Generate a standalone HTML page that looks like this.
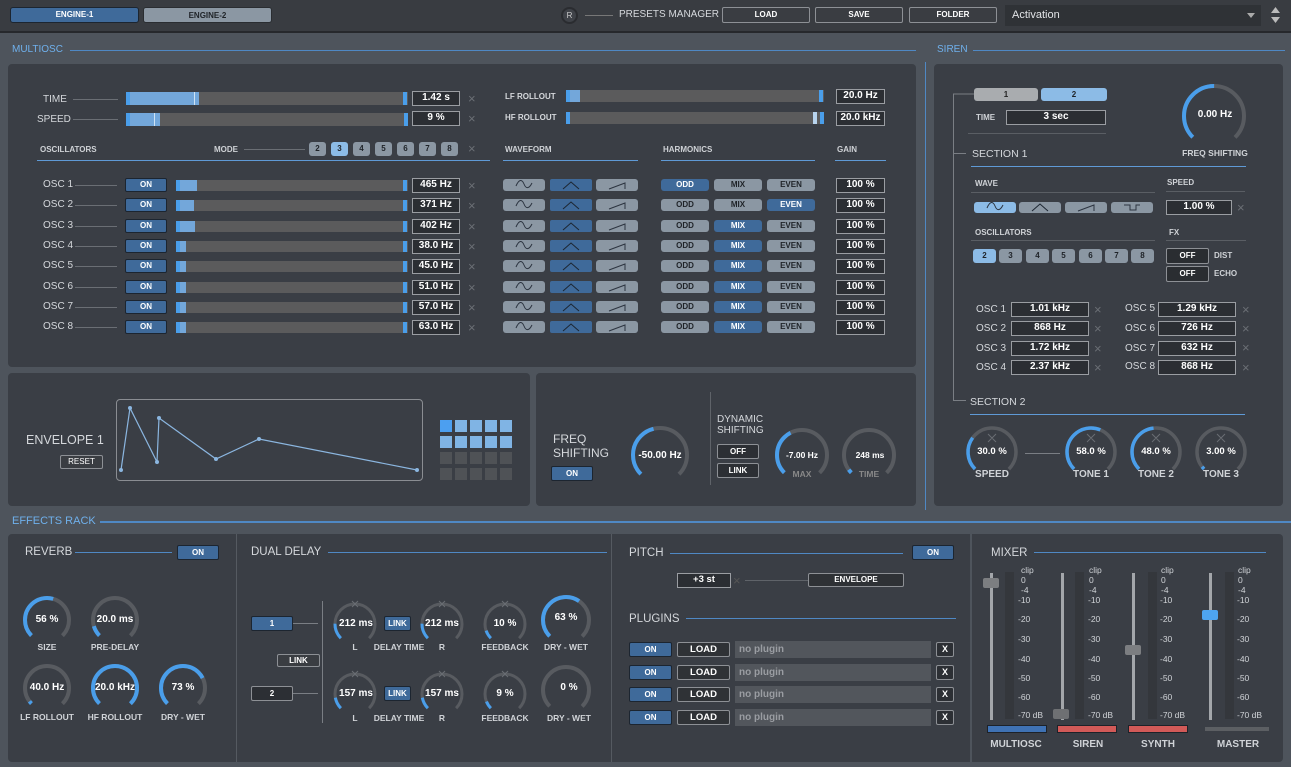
<!DOCTYPE html>
<html><head><meta charset="utf-8"><style>
*{margin:0;padding:0;box-sizing:border-box}
body{width:1291px;height:767px;background:#4e545c;position:relative;overflow:hidden;font-family:"Liberation Sans",sans-serif;color:#d8dade}
.a{position:absolute}
.p{position:absolute;background:#3a3e45;border-radius:4px}
.l{position:absolute;font-size:10px;line-height:12px;color:#d5d8dc;white-space:nowrap}
.s{font-size:8px;font-weight:bold;color:#cfd2d6}
.b{position:absolute;font-size:8px;font-weight:bold;text-align:center;border-radius:2px;white-space:nowrap}
.bb{background:#3f6a9a;border:1px solid #1c2530;color:#fff}
.gb{background:#8b97a3;color:#1f2328;border-radius:3px}
.lb{background:#8cbbe6;color:#1f2328;border-radius:3px}
.db{background:#2c2f34;border:1px solid #8d9095;color:#fff}
.vb{position:absolute;background:#2b2e33;border:1px solid #9a9da2;color:#fff;font-size:10px;font-weight:bold;text-align:center;line-height:12px}
.x{position:absolute;color:#6b6f75;font-size:13px;line-height:12px}
.tr{position:absolute;background:#5b5b5c}
.f{position:absolute;background:#73a7da}
.m{position:absolute;background:#4a9eea}
.h{position:absolute;color:#6fb0ec;font-size:11px;line-height:12px}
.kv{position:absolute;font-size:10px;font-weight:bold;color:#fff;text-align:center;line-height:12px}
.kl{position:absolute;font-size:8.5px;color:#d0d3d7;text-align:center;line-height:10px;font-weight:bold}
.sc{position:absolute;font-size:8.5px;color:#d0d3d7;line-height:10px}
</style></head><body>
<!-- top bar -->
<div class="a" style="left:0;top:0;width:1291px;height:33px;background:#393c41;border-bottom:2px solid #26282c"></div>
<div class="b bb" style="left:10px;top:7px;width:129px;height:16px;line-height:14px;border-radius:3px">ENGINE-1</div>
<div class="b gb" style="left:143px;top:7px;width:129px;height:16px;line-height:16px;border:1px solid #2a2d31">ENGINE-2</div>
<div class="a" style="left:561px;top:7px;width:17px;height:17px;border-radius:50%;border:2px solid #2a2c30;background:#3f4248;font-size:8px;line-height:13px;text-align:center;color:#ccc">R</div>
<div class="a" style="left:585px;top:15px;width:28px;height:1px;background:#777"></div>
<div class="l" style="left:619px;top:9px;font-size:10px">PRESETS MANAGER</div>
<div class="b db" style="left:722px;top:7px;width:88px;height:16px;line-height:14px;background:#3a3d42">LOAD</div>
<div class="b db" style="left:815px;top:7px;width:88px;height:16px;line-height:14px;background:#3a3d42">SAVE</div>
<div class="b db" style="left:909px;top:7px;width:88px;height:16px;line-height:14px;background:#3a3d42">FOLDER</div>
<div class="a" style="left:1005px;top:5px;width:256px;height:21px;background:#2f3236"></div>
<div class="l" style="left:1012px;top:9px;font-size:11px;color:#e2e4e7">Activation</div>
<!-- headers -->
<div class="h" style="left:12px;top:44px;font-size:10px">MULTIOSC</div>
<div class="a" style="left:70px;top:50px;width:846px;height:1px;background:#4f88c4"></div>
<div class="h" style="left:937px;top:44px;font-size:10px">SIREN</div>
<div class="a" style="left:973px;top:50px;width:312px;height:1px;background:#4f88c4"></div>
<div class="a" style="left:925px;top:62px;width:1px;height:448px;background:#4f88c4"></div>
<div class="h" style="left:12px;top:515px">EFFECTS RACK</div>
<div class="a" style="left:100px;top:521px;width:1191px;height:2px;background:#4f88c4"></div>
<!-- panels -->
<div class="p" style="left:8px;top:64px;width:908px;height:303px"></div>
<div class="p" style="left:8px;top:373px;width:522px;height:133px"></div>
<div class="p" style="left:536px;top:373px;width:380px;height:133px"></div>
<div class="p" style="left:934px;top:64px;width:349px;height:442px"></div>
<div class="p" style="left:8px;top:534px;width:1275px;height:228px"></div>
<div class="a" style="left:236px;top:534px;width:1px;height:228px;background:#555a61"></div>
<div class="a" style="left:611px;top:534px;width:1px;height:228px;background:#555a61"></div>
<div class="a" style="left:970px;top:534px;width:2px;height:228px;background:#4e545c"></div>

<!-- MULTIOSC top sliders -->
<div class="l" style="left:43px;top:94px">TIME</div>
<div class="a" style="left:73px;top:99px;width:45px;height:1px;background:#6a6e74"></div>
<div class="tr" style="left:126px;top:92px;width:282px;height:13px"></div>
<div class="f" style="left:126px;top:92px;width:73px;height:13px"></div>
<div class="m" style="left:126px;top:92px;width:4px;height:13px"></div>
<div class="a" style="left:194px;top:92px;width:1px;height:13px;background:#cfe3f5"></div>
<div class="m" style="left:403px;top:92px;width:4px;height:13px"></div>
<div class="vb" style="left:412px;top:91px;width:48px;height:15px">1.42 s</div><div class="x" style="left:468px;top:93px">×</div>
<div class="l" style="left:37px;top:114px">SPEED</div>
<div class="a" style="left:73px;top:119px;width:45px;height:1px;background:#6a6e74"></div>
<div class="tr" style="left:126px;top:113px;width:282px;height:13px"></div>
<div class="f" style="left:126px;top:113px;width:34px;height:13px"></div>
<div class="m" style="left:126px;top:113px;width:4px;height:13px"></div>
<div class="a" style="left:154px;top:113px;width:1px;height:13px;background:#cfe3f5"></div>
<div class="m" style="left:404px;top:113px;width:4px;height:13px"></div>
<div class="vb" style="left:412px;top:111px;width:48px;height:15px">9 %</div><div class="x" style="left:468px;top:113px">×</div>

<div class="l s" style="left:40px;top:144px">OSCILLATORS</div>
<div class="l s" style="left:214px;top:144px">MODE</div>
<div class="a" style="left:244px;top:149px;width:61px;height:1px;background:#6a6e74"></div>
<div class="b gb" style="left:309px;top:142px;width:17px;height:14px;line-height:14px">2</div>
<div class="b lb" style="left:331px;top:142px;width:17px;height:14px;line-height:14px">3</div>
<div class="b gb" style="left:353px;top:142px;width:17px;height:14px;line-height:14px">4</div>
<div class="b gb" style="left:375px;top:142px;width:17px;height:14px;line-height:14px">5</div>
<div class="b gb" style="left:397px;top:142px;width:17px;height:14px;line-height:14px">6</div>
<div class="b gb" style="left:419px;top:142px;width:17px;height:14px;line-height:14px">7</div>
<div class="b gb" style="left:441px;top:142px;width:17px;height:14px;line-height:14px">8</div>
<div class="x" style="left:468px;top:143px">×</div>
<div class="a" style="left:37px;top:160px;width:453px;height:1px;background:#5f9ad6"></div>
<div class="l" style="left:505px;top:91px;font-size:8px;font-weight:bold">LF ROLLOUT</div>
<div class="tr" style="left:566px;top:90px;width:258px;height:12px"></div>
<div class="f" style="left:566px;top:90px;width:14px;height:12px"></div><div class="m" style="left:566px;top:90px;width:4px;height:12px"></div>
<div class="m" style="left:819px;top:90px;width:4px;height:12px"></div>
<div class="vb" style="left:836px;top:89px;width:49px;height:15px">20.0 Hz</div>
<div class="l" style="left:505px;top:112px;font-size:8px;font-weight:bold">HF ROLLOUT</div>
<div class="tr" style="left:566px;top:112px;width:258px;height:12px"></div>
<div class="m" style="left:566px;top:112px;width:4px;height:12px"></div>
<div class="a" style="left:813px;top:112px;width:4px;height:12px;background:#b8d4ee"></div><div class="m" style="left:820px;top:112px;width:4px;height:12px"></div>
<div class="vb" style="left:836px;top:111px;width:49px;height:15px">20.0 kHz</div>
<div class="l s" style="left:505px;top:144px">WAVEFORM</div><div class="a" style="left:503px;top:160px;width:135px;height:1px;background:#5f9ad6"></div>
<div class="l s" style="left:663px;top:144px">HARMONICS</div><div class="a" style="left:661px;top:160px;width:154px;height:1px;background:#5f9ad6"></div>
<div class="l s" style="left:837px;top:144px">GAIN</div><div class="a" style="left:835px;top:160px;width:51px;height:1px;background:#5f9ad6"></div>

<!-- OSC rows -->
<div class="l" style="left:43px;top:179px">OSC 1</div><div class="b bb" style="left:125px;top:178px;width:42px;height:14px;line-height:12px">ON</div><div class="tr" style="left:176px;top:180px;width:232px;height:11px"></div><div class="f" style="left:176px;top:180px;width:21px;height:11px"></div><div class="m" style="left:176px;top:180px;width:4px;height:11px"></div><div class="m" style="left:403px;top:180px;width:4px;height:11px"></div><div class="vb" style="left:412px;top:178px;width:48px;height:15px">465 Hz</div><div class="x" style="left:468px;top:180px">×</div>
<div class="l" style="left:43px;top:199px">OSC 2</div><div class="b bb" style="left:125px;top:198px;width:42px;height:14px;line-height:12px">ON</div><div class="tr" style="left:176px;top:200px;width:232px;height:11px"></div><div class="f" style="left:176px;top:200px;width:18px;height:11px"></div><div class="m" style="left:176px;top:200px;width:4px;height:11px"></div><div class="m" style="left:403px;top:200px;width:4px;height:11px"></div><div class="vb" style="left:412px;top:198px;width:48px;height:15px">371 Hz</div><div class="x" style="left:468px;top:200px">×</div>
<div class="l" style="left:43px;top:220px">OSC 3</div><div class="b bb" style="left:125px;top:219px;width:42px;height:14px;line-height:12px">ON</div><div class="tr" style="left:176px;top:221px;width:232px;height:11px"></div><div class="f" style="left:176px;top:221px;width:19px;height:11px"></div><div class="m" style="left:176px;top:221px;width:4px;height:11px"></div><div class="m" style="left:403px;top:221px;width:4px;height:11px"></div><div class="vb" style="left:412px;top:219px;width:48px;height:15px">402 Hz</div><div class="x" style="left:468px;top:221px">×</div>
<div class="l" style="left:43px;top:240px">OSC 4</div><div class="b bb" style="left:125px;top:239px;width:42px;height:14px;line-height:12px">ON</div><div class="tr" style="left:176px;top:241px;width:232px;height:11px"></div><div class="f" style="left:176px;top:241px;width:10px;height:11px"></div><div class="m" style="left:176px;top:241px;width:4px;height:11px"></div><div class="m" style="left:403px;top:241px;width:4px;height:11px"></div><div class="vb" style="left:412px;top:239px;width:48px;height:15px">38.0 Hz</div><div class="x" style="left:468px;top:241px">×</div>
<div class="l" style="left:43px;top:260px">OSC 5</div><div class="b bb" style="left:125px;top:259px;width:42px;height:14px;line-height:12px">ON</div><div class="tr" style="left:176px;top:261px;width:232px;height:11px"></div><div class="f" style="left:176px;top:261px;width:10px;height:11px"></div><div class="m" style="left:176px;top:261px;width:4px;height:11px"></div><div class="m" style="left:403px;top:261px;width:4px;height:11px"></div><div class="vb" style="left:412px;top:259px;width:48px;height:15px">45.0 Hz</div><div class="x" style="left:468px;top:261px">×</div>
<div class="l" style="left:43px;top:281px">OSC 6</div><div class="b bb" style="left:125px;top:280px;width:42px;height:14px;line-height:12px">ON</div><div class="tr" style="left:176px;top:282px;width:232px;height:11px"></div><div class="f" style="left:176px;top:282px;width:10px;height:11px"></div><div class="m" style="left:176px;top:282px;width:4px;height:11px"></div><div class="m" style="left:403px;top:282px;width:4px;height:11px"></div><div class="vb" style="left:412px;top:280px;width:48px;height:15px">51.0 Hz</div><div class="x" style="left:468px;top:282px">×</div>
<div class="l" style="left:43px;top:301px">OSC 7</div><div class="b bb" style="left:125px;top:300px;width:42px;height:14px;line-height:12px">ON</div><div class="tr" style="left:176px;top:302px;width:232px;height:11px"></div><div class="f" style="left:176px;top:302px;width:10px;height:11px"></div><div class="m" style="left:176px;top:302px;width:4px;height:11px"></div><div class="m" style="left:403px;top:302px;width:4px;height:11px"></div><div class="vb" style="left:412px;top:300px;width:48px;height:15px">57.0 Hz</div><div class="x" style="left:468px;top:302px">×</div>
<div class="l" style="left:43px;top:321px">OSC 8</div><div class="b bb" style="left:125px;top:320px;width:42px;height:14px;line-height:12px">ON</div><div class="tr" style="left:176px;top:322px;width:232px;height:11px"></div><div class="f" style="left:176px;top:322px;width:10px;height:11px"></div><div class="m" style="left:176px;top:322px;width:4px;height:11px"></div><div class="m" style="left:403px;top:322px;width:4px;height:11px"></div><div class="vb" style="left:412px;top:320px;width:48px;height:15px">63.0 Hz</div><div class="x" style="left:468px;top:322px">×</div>

<!-- waveform/harmonic/gain rows -->
<div class="b gb" style="left:503px;top:179px;width:42px;height:12px"></div><div class="b bb" style="left:550px;top:179px;width:42px;height:12px;border:none"></div><div class="b gb" style="left:596px;top:179px;width:42px;height:12px"></div><div class="b bb" style="left:661px;top:179px;width:48px;height:12px;line-height:12px;border:none;border-radius:3px">ODD</div><div class="b gb" style="left:714px;top:179px;width:48px;height:12px;line-height:12px">MIX</div><div class="b gb" style="left:767px;top:179px;width:48px;height:12px;line-height:12px">EVEN</div><div class="vb" style="left:836px;top:178px;width:49px;height:15px">100 %</div>
<div class="b gb" style="left:503px;top:199px;width:42px;height:12px"></div><div class="b bb" style="left:550px;top:199px;width:42px;height:12px;border:none"></div><div class="b gb" style="left:596px;top:199px;width:42px;height:12px"></div><div class="b gb" style="left:661px;top:199px;width:48px;height:12px;line-height:12px">ODD</div><div class="b gb" style="left:714px;top:199px;width:48px;height:12px;line-height:12px">MIX</div><div class="b bb" style="left:767px;top:199px;width:48px;height:12px;line-height:12px;border:none;border-radius:3px">EVEN</div><div class="vb" style="left:836px;top:198px;width:49px;height:15px">100 %</div>
<div class="b gb" style="left:503px;top:220px;width:42px;height:12px"></div><div class="b bb" style="left:550px;top:220px;width:42px;height:12px;border:none"></div><div class="b gb" style="left:596px;top:220px;width:42px;height:12px"></div><div class="b gb" style="left:661px;top:220px;width:48px;height:12px;line-height:12px">ODD</div><div class="b bb" style="left:714px;top:220px;width:48px;height:12px;line-height:12px;border:none;border-radius:3px">MIX</div><div class="b gb" style="left:767px;top:220px;width:48px;height:12px;line-height:12px">EVEN</div><div class="vb" style="left:836px;top:219px;width:49px;height:15px">100 %</div>
<div class="b gb" style="left:503px;top:240px;width:42px;height:12px"></div><div class="b bb" style="left:550px;top:240px;width:42px;height:12px;border:none"></div><div class="b gb" style="left:596px;top:240px;width:42px;height:12px"></div><div class="b gb" style="left:661px;top:240px;width:48px;height:12px;line-height:12px">ODD</div><div class="b bb" style="left:714px;top:240px;width:48px;height:12px;line-height:12px;border:none;border-radius:3px">MIX</div><div class="b gb" style="left:767px;top:240px;width:48px;height:12px;line-height:12px">EVEN</div><div class="vb" style="left:836px;top:239px;width:49px;height:15px">100 %</div>
<div class="b gb" style="left:503px;top:260px;width:42px;height:12px"></div><div class="b bb" style="left:550px;top:260px;width:42px;height:12px;border:none"></div><div class="b gb" style="left:596px;top:260px;width:42px;height:12px"></div><div class="b gb" style="left:661px;top:260px;width:48px;height:12px;line-height:12px">ODD</div><div class="b bb" style="left:714px;top:260px;width:48px;height:12px;line-height:12px;border:none;border-radius:3px">MIX</div><div class="b gb" style="left:767px;top:260px;width:48px;height:12px;line-height:12px">EVEN</div><div class="vb" style="left:836px;top:259px;width:49px;height:15px">100 %</div>
<div class="b gb" style="left:503px;top:281px;width:42px;height:12px"></div><div class="b bb" style="left:550px;top:281px;width:42px;height:12px;border:none"></div><div class="b gb" style="left:596px;top:281px;width:42px;height:12px"></div><div class="b gb" style="left:661px;top:281px;width:48px;height:12px;line-height:12px">ODD</div><div class="b bb" style="left:714px;top:281px;width:48px;height:12px;line-height:12px;border:none;border-radius:3px">MIX</div><div class="b gb" style="left:767px;top:281px;width:48px;height:12px;line-height:12px">EVEN</div><div class="vb" style="left:836px;top:280px;width:49px;height:15px">100 %</div>
<div class="b gb" style="left:503px;top:301px;width:42px;height:12px"></div><div class="b bb" style="left:550px;top:301px;width:42px;height:12px;border:none"></div><div class="b gb" style="left:596px;top:301px;width:42px;height:12px"></div><div class="b gb" style="left:661px;top:301px;width:48px;height:12px;line-height:12px">ODD</div><div class="b bb" style="left:714px;top:301px;width:48px;height:12px;line-height:12px;border:none;border-radius:3px">MIX</div><div class="b gb" style="left:767px;top:301px;width:48px;height:12px;line-height:12px">EVEN</div><div class="vb" style="left:836px;top:300px;width:49px;height:15px">100 %</div>
<div class="b gb" style="left:503px;top:321px;width:42px;height:12px"></div><div class="b bb" style="left:550px;top:321px;width:42px;height:12px;border:none"></div><div class="b gb" style="left:596px;top:321px;width:42px;height:12px"></div><div class="b gb" style="left:661px;top:321px;width:48px;height:12px;line-height:12px">ODD</div><div class="b bb" style="left:714px;top:321px;width:48px;height:12px;line-height:12px;border:none;border-radius:3px">MIX</div><div class="b gb" style="left:767px;top:321px;width:48px;height:12px;line-height:12px">EVEN</div><div class="vb" style="left:836px;top:320px;width:49px;height:15px">100 %</div>

<!-- Envelope -->
<div class="l" style="left:26px;top:433px;font-size:12.5px;line-height:14px">ENVELOPE 1</div>
<div class="b db" style="left:60px;top:455px;width:43px;height:14px;line-height:12px;background:#3a3d42;font-weight:normal">RESET</div>
<div class="a" style="left:116px;top:399px;width:307px;height:82px;border:1px solid #8a8d92;border-radius:4px"></div>
<!-- freq -->
<div class="l" style="left:553px;top:432px;font-size:12px;line-height:14px">FREQ<br>SHIFTING</div>
<div class="b bb" style="left:551px;top:466px;width:42px;height:15px;line-height:13px">ON</div>
<div class="a" style="left:710px;top:392px;width:1px;height:93px;background:#5f6369"></div>
<div class="l" style="left:717px;top:414px;font-size:10px;line-height:11px">DYNAMIC<br>SHIFTING</div>
<div class="b db" style="left:717px;top:444px;width:42px;height:15px;line-height:13px">OFF</div>
<div class="b db" style="left:717px;top:463px;width:42px;height:15px;line-height:13px">LINK</div>
<div class="kv" style="left:630px;top:450px;width:60px">-50.00 Hz</div>
<div class="kv" style="left:772px;top:449px;width:60px;font-size:8.5px">-7.00 Hz</div>
<div class="kl" style="left:782px;top:469px;width:40px;color:#888">MAX</div>
<div class="kv" style="left:840px;top:449px;width:60px;font-size:8.5px">248 ms</div>
<div class="kl" style="left:849px;top:469px;width:40px;color:#888">TIME</div>

<!-- SIREN -->
<div class="b" style="left:974px;top:88px;width:64px;height:13px;line-height:13px;background:#a9acaf;color:#222;border-radius:3px">1</div>
<div class="b lb" style="left:1041px;top:88px;width:66px;height:13px;line-height:13px">2</div>
<div class="l s" style="left:976px;top:112px">TIME</div>
<div class="vb" style="left:1006px;top:110px;width:100px;height:15px">3 sec</div>
<div class="a" style="left:968px;top:133px;width:138px;height:1px;background:#5a5e64"></div>
<div class="kv" style="left:1185px;top:109px;width:60px">0.00 Hz</div>
<div class="kl" style="left:1170px;top:148px;width:90px">FREQ SHIFTING</div>
<div class="l" style="left:972px;top:148px;font-size:10.5px">SECTION 1</div>
<div class="a" style="left:971px;top:166px;width:275px;height:1px;background:#5f9ad6"></div>
<div class="l s" style="left:975px;top:178px">WAVE</div><div class="a" style="left:971px;top:192px;width:184px;height:1px;background:#5a5e64"></div>
<div class="l s" style="left:1167px;top:177px">SPEED</div><div class="a" style="left:1166px;top:191px;width:79px;height:1px;background:#5a5e64"></div>
<div class="b lb" style="left:974px;top:202px;width:42px;height:11px"></div>
<div class="b gb" style="left:1019px;top:202px;width:42px;height:11px"></div>
<div class="b gb" style="left:1065px;top:202px;width:42px;height:11px"></div>
<div class="b gb" style="left:1111px;top:202px;width:42px;height:11px"></div>
<div class="vb" style="left:1166px;top:200px;width:66px;height:15px">1.00 %</div><div class="x" style="left:1237px;top:202px">×</div>
<div class="l s" style="left:975px;top:227px">OSCILLATORS</div><div class="a" style="left:971px;top:240px;width:184px;height:1px;background:#5a5e64"></div>
<div class="l s" style="left:1169px;top:227px">FX</div><div class="a" style="left:1166px;top:240px;width:80px;height:1px;background:#5a5e64"></div>
<div class="b lb" style="left:973px;top:249px;width:23px;height:14px;line-height:14px">2</div>
<div class="b gb" style="left:999px;top:249px;width:23px;height:14px;line-height:14px">3</div>
<div class="b gb" style="left:1026px;top:249px;width:23px;height:14px;line-height:14px">4</div>
<div class="b gb" style="left:1052px;top:249px;width:23px;height:14px;line-height:14px">5</div>
<div class="b gb" style="left:1079px;top:249px;width:23px;height:14px;line-height:14px">6</div>
<div class="b gb" style="left:1105px;top:249px;width:23px;height:14px;line-height:14px">7</div>
<div class="b gb" style="left:1131px;top:249px;width:23px;height:14px;line-height:14px">8</div>
<div class="b db" style="left:1166px;top:248px;width:43px;height:16px;line-height:14px;background:#2a2d31">OFF</div><div class="l s" style="left:1214px;top:250px">DIST</div>
<div class="b db" style="left:1166px;top:266px;width:43px;height:16px;line-height:14px;background:#2a2d31">OFF</div><div class="l s" style="left:1214px;top:268px">ECHO</div>
<div class="l" style="left:976px;top:304px">OSC 1</div><div class="vb" style="left:1011px;top:302px;width:78px;height:15px">1.01 kHz</div><div class="x" style="left:1094px;top:304px">×</div>
<div class="l" style="left:976px;top:323px">OSC 2</div><div class="vb" style="left:1011px;top:321px;width:78px;height:15px">868 Hz</div><div class="x" style="left:1094px;top:323px">×</div>
<div class="l" style="left:976px;top:343px">OSC 3</div><div class="vb" style="left:1011px;top:341px;width:78px;height:15px">1.72 kHz</div><div class="x" style="left:1094px;top:343px">×</div>
<div class="l" style="left:976px;top:362px">OSC 4</div><div class="vb" style="left:1011px;top:360px;width:78px;height:15px">2.37 kHz</div><div class="x" style="left:1094px;top:362px">×</div>
<div class="l" style="left:1125px;top:303px">OSC 5</div><div class="vb" style="left:1158px;top:302px;width:78px;height:15px">1.29 kHz</div><div class="x" style="left:1242px;top:304px">×</div>
<div class="l" style="left:1125px;top:323px">OSC 6</div><div class="vb" style="left:1158px;top:321px;width:78px;height:15px">726 Hz</div><div class="x" style="left:1242px;top:323px">×</div>
<div class="l" style="left:1125px;top:343px">OSC 7</div><div class="vb" style="left:1158px;top:341px;width:78px;height:15px">632 Hz</div><div class="x" style="left:1242px;top:342px">×</div>
<div class="l" style="left:1125px;top:361px">OSC 8</div><div class="vb" style="left:1158px;top:360px;width:78px;height:15px">868 Hz</div><div class="x" style="left:1242px;top:362px">×</div>
<div class="l" style="left:970px;top:396px;font-size:10.5px">SECTION 2</div>
<div class="a" style="left:970px;top:414px;width:275px;height:1px;background:#5f9ad6"></div>
<div class="kv" style="left:967px;top:446px;width:50px;font-size:9.5px">30.0 %</div><div class="kl" style="left:967px;top:470px;width:50px;font-size:10px">SPEED</div>
<div class="kv" style="left:1066px;top:446px;width:50px;font-size:9.5px">58.0 %</div><div class="kl" style="left:1066px;top:470px;width:50px;font-size:10px">TONE 1</div>
<div class="kv" style="left:1131px;top:446px;width:50px;font-size:9.5px">48.0 %</div><div class="kl" style="left:1131px;top:470px;width:50px;font-size:10px">TONE 2</div>
<div class="kv" style="left:1196px;top:446px;width:50px;font-size:9.5px">3.00 %</div><div class="kl" style="left:1196px;top:470px;width:50px;font-size:10px">TONE 3</div>

<!-- REVERB -->
<div class="l" style="left:25px;top:546px;font-size:11.5px">REVERB</div>
<div class="a" style="left:75px;top:552px;width:97px;height:1px;background:#4f88c4"></div>
<div class="b bb" style="left:177px;top:545px;width:42px;height:15px;line-height:13px">ON</div>
<div class="kv" style="left:22px;top:614px;width:50px">56 %</div><div class="kl" style="left:22px;top:642px;width:50px">SIZE</div>
<div class="kv" style="left:90px;top:614px;width:50px">20.0 ms</div><div class="kl" style="left:85px;top:642px;width:60px">PRE-DELAY</div>
<div class="kv" style="left:22px;top:682px;width:50px">40.0 Hz</div><div class="kl" style="left:17px;top:712px;width:60px">LF ROLLOUT</div>
<div class="kv" style="left:87px;top:682px;width:56px">20.0 kHz</div><div class="kl" style="left:85px;top:712px;width:60px">HF ROLLOUT</div>
<div class="kv" style="left:158px;top:682px;width:50px">73 %</div><div class="kl" style="left:153px;top:712px;width:60px">DRY - WET</div>
<!-- DUAL DELAY -->
<div class="l" style="left:251px;top:546px;font-size:11.5px">DUAL DELAY</div>
<div class="a" style="left:328px;top:552px;width:279px;height:1px;background:#4f88c4"></div>
<div class="b bb" style="left:251px;top:616px;width:42px;height:15px;line-height:13px">1</div>
<div class="b db" style="left:251px;top:686px;width:42px;height:15px;line-height:13px">2</div>
<div class="b db" style="left:277px;top:654px;width:43px;height:13px;line-height:11px;background:#3a3d42">LINK</div>
<div class="b bb" style="left:384px;top:616px;width:27px;height:15px;line-height:13px">LINK</div>
<div class="b bb" style="left:384px;top:686px;width:27px;height:15px;line-height:13px">LINK</div>
<div class="kv" style="left:331px;top:618px;width:50px">212 ms</div><div class="kv" style="left:417px;top:618px;width:50px">212 ms</div>
<div class="kv" style="left:480px;top:618px;width:50px">10 %</div><div class="kv" style="left:541px;top:612px;width:50px">63 %</div>
<div class="kl" style="left:345px;top:642px;width:20px">L</div><div class="kl" style="left:370px;top:642px;width:58px">DELAY TIME</div><div class="kl" style="left:432px;top:642px;width:20px">R</div>
<div class="kl" style="left:475px;top:642px;width:60px">FEEDBACK</div><div class="kl" style="left:536px;top:642px;width:60px">DRY - WET</div>
<div class="kv" style="left:331px;top:688px;width:50px">157 ms</div><div class="kv" style="left:417px;top:688px;width:50px">157 ms</div>
<div class="kv" style="left:480px;top:688px;width:50px">9 %</div><div class="kv" style="left:544px;top:682px;width:50px">0 %</div>
<div class="kl" style="left:345px;top:713px;width:20px">L</div><div class="kl" style="left:370px;top:713px;width:58px">DELAY TIME</div><div class="kl" style="left:432px;top:713px;width:20px">R</div>
<div class="kl" style="left:475px;top:713px;width:60px">FEEDBACK</div><div class="kl" style="left:539px;top:713px;width:60px">DRY - WET</div>
<!-- PITCH / PLUGINS -->
<div class="l" style="left:629px;top:547px;font-size:11.5px">PITCH</div>
<div class="a" style="left:670px;top:553px;width:233px;height:1px;background:#4f88c4"></div>
<div class="b bb" style="left:912px;top:545px;width:42px;height:15px;line-height:13px">ON</div>
<div class="vb" style="left:677px;top:573px;width:54px;height:15px;font-size:9.5px">+3 st</div><div class="x" style="left:733px;top:575px;color:#555">×</div>
<div class="a" style="left:745px;top:580px;width:63px;height:1px;background:#5f6369"></div>
<div class="b db" style="left:808px;top:573px;width:96px;height:14px;line-height:12px;background:#2e3135">ENVELOPE</div>
<div class="l" style="left:629px;top:613px;font-size:11.5px">PLUGINS</div>
<div class="a" style="left:686px;top:618px;width:270px;height:1px;background:#4f88c4"></div>
<div class="b bb" style="left:629px;top:642px;width:43px;height:15px;line-height:13px">ON</div><div class="b db" style="left:677px;top:642px;width:53px;height:15px;line-height:13px;font-size:9.5px;background:#2f3236">LOAD</div><div class="a" style="left:735px;top:641px;width:196px;height:17px;background:#52565c;color:#9a9da2;font-size:10px;font-weight:bold;line-height:17px;padding-left:4px">no plugin</div><div class="b db" style="left:936px;top:642px;width:18px;height:15px;line-height:13px;font-size:9px">X</div>
<div class="b bb" style="left:629px;top:665px;width:43px;height:15px;line-height:13px">ON</div><div class="b db" style="left:677px;top:665px;width:53px;height:15px;line-height:13px;font-size:9.5px;background:#2f3236">LOAD</div><div class="a" style="left:735px;top:664px;width:196px;height:17px;background:#52565c;color:#9a9da2;font-size:10px;font-weight:bold;line-height:17px;padding-left:4px">no plugin</div><div class="b db" style="left:936px;top:665px;width:18px;height:15px;line-height:13px;font-size:9px">X</div>
<div class="b bb" style="left:629px;top:687px;width:43px;height:15px;line-height:13px">ON</div><div class="b db" style="left:677px;top:687px;width:53px;height:15px;line-height:13px;font-size:9.5px;background:#2f3236">LOAD</div><div class="a" style="left:735px;top:686px;width:196px;height:17px;background:#52565c;color:#9a9da2;font-size:10px;font-weight:bold;line-height:17px;padding-left:4px">no plugin</div><div class="b db" style="left:936px;top:687px;width:18px;height:15px;line-height:13px;font-size:9px">X</div>
<div class="b bb" style="left:629px;top:710px;width:43px;height:15px;line-height:13px">ON</div><div class="b db" style="left:677px;top:710px;width:53px;height:15px;line-height:13px;font-size:9.5px;background:#2f3236">LOAD</div><div class="a" style="left:735px;top:709px;width:196px;height:17px;background:#52565c;color:#9a9da2;font-size:10px;font-weight:bold;line-height:17px;padding-left:4px">no plugin</div><div class="b db" style="left:936px;top:710px;width:18px;height:15px;line-height:13px;font-size:9px">X</div>
<!-- MIXER -->
<div class="l" style="left:991px;top:547px;font-size:11.5px">MIXER</div>
<div class="a" style="left:1034px;top:552px;width:232px;height:1px;background:#4f88c4"></div>
<div class="a" style="left:1005px;top:572px;width:9px;height:147px;background:#34373c"></div>
<div class="a" style="left:1075px;top:572px;width:9px;height:147px;background:#34373c"></div>
<div class="a" style="left:1148px;top:572px;width:9px;height:147px;background:#34373c"></div>
<div class="a" style="left:1225px;top:572px;width:9px;height:147px;background:#34373c"></div>
<div class="a" style="left:990px;top:573px;width:3px;height:147px;background:#a3a6aa"></div>
<div class="a" style="left:1061px;top:573px;width:3px;height:147px;background:#a3a6aa"></div>
<div class="a" style="left:1132px;top:573px;width:3px;height:147px;background:#a3a6aa"></div>
<div class="a" style="left:1209px;top:573px;width:3px;height:147px;background:#a3a6aa"></div>
<div class="a" style="left:983px;top:578px;width:16px;height:10px;background:#7c7e81;border-radius:2px"></div>
<div class="a" style="left:1053px;top:709px;width:16px;height:10px;background:#6e7073;border-radius:2px"></div>
<div class="a" style="left:1125px;top:645px;width:16px;height:10px;background:#7c7e81;border-radius:2px"></div>
<div class="a" style="left:1202px;top:610px;width:16px;height:10px;background:#4ea4f0;border-radius:2px"></div>
<div class="sc" style="left:1021px;top:565px">clip<br>0<br>-4</div><div class="sc" style="left:1018px;top:595px">-10</div><div class="sc" style="left:1018px;top:614px">-20</div><div class="sc" style="left:1018px;top:634px">-30</div><div class="sc" style="left:1018px;top:654px">-40</div><div class="sc" style="left:1018px;top:673px">-50</div><div class="sc" style="left:1018px;top:692px">-60</div><div class="sc" style="left:1018px;top:710px">-70 dB</div>
<div class="sc" style="left:1089px;top:565px">clip<br>0<br>-4</div><div class="sc" style="left:1088px;top:595px">-10</div><div class="sc" style="left:1088px;top:614px">-20</div><div class="sc" style="left:1088px;top:634px">-30</div><div class="sc" style="left:1088px;top:654px">-40</div><div class="sc" style="left:1088px;top:673px">-50</div><div class="sc" style="left:1088px;top:692px">-60</div><div class="sc" style="left:1088px;top:710px">-70 dB</div>
<div class="sc" style="left:1161px;top:565px">clip<br>0<br>-4</div><div class="sc" style="left:1160px;top:595px">-10</div><div class="sc" style="left:1160px;top:614px">-20</div><div class="sc" style="left:1160px;top:634px">-30</div><div class="sc" style="left:1160px;top:654px">-40</div><div class="sc" style="left:1160px;top:673px">-50</div><div class="sc" style="left:1160px;top:692px">-60</div><div class="sc" style="left:1160px;top:710px">-70 dB</div>
<div class="sc" style="left:1238px;top:565px">clip<br>0<br>-4</div><div class="sc" style="left:1237px;top:595px">-10</div><div class="sc" style="left:1237px;top:614px">-20</div><div class="sc" style="left:1237px;top:634px">-30</div><div class="sc" style="left:1237px;top:654px">-40</div><div class="sc" style="left:1237px;top:673px">-50</div><div class="sc" style="left:1237px;top:692px">-60</div><div class="sc" style="left:1237px;top:710px">-70 dB</div>
<div class="a" style="left:987px;top:725px;width:60px;height:8px;background:#3f72b4;border:1px solid #1d2229"></div>
<div class="a" style="left:1057px;top:725px;width:60px;height:8px;background:#d25a58;border:1px solid #1d2229"></div>
<div class="a" style="left:1128px;top:725px;width:60px;height:8px;background:#d25a58;border:1px solid #1d2229"></div>
<div class="a" style="left:1205px;top:727px;width:64px;height:4px;background:#5c5f63"></div>
<div class="kl" style="left:981px;top:740px;width:70px;font-size:10px">MULTIOSC</div>
<div class="kl" style="left:1053px;top:740px;width:70px;font-size:10px">SIREN</div>
<div class="kl" style="left:1123px;top:740px;width:70px;font-size:10px">SYNTH</div>
<div class="kl" style="left:1203px;top:740px;width:70px;font-size:10px">MASTER</div>

<svg class="a" style="left:0;top:0" width="1291" height="767" viewBox="0 0 1291 767">
<defs>
<path id="sin" d="M0 6 C3 -1 6 -1 8 4 C10 9 13 9 16 3" fill="none" stroke="#2c3440" stroke-width="1"/>
<path id="tri" d="M0 9 L8 2 L16 9" fill="none" stroke="#1c2632" stroke-width="1"/>
<path id="saw" d="M0 9 L16 3 L16 9" fill="none" stroke="#2c3440" stroke-width="1"/>
<path id="sq" d="M0 3 L6 3 L6 8 L12 8 L12 3 L16 3" fill="none" stroke="#2c3440" stroke-width="1"/>
</defs>
<g>
<use href="#sin" x="516" y="180"/><use href="#tri" x="563" y="180"/><use href="#saw" x="609" y="180"/>
<use href="#sin" x="516" y="200"/><use href="#tri" x="563" y="200"/><use href="#saw" x="609" y="200"/>
<use href="#sin" x="516" y="221"/><use href="#tri" x="563" y="221"/><use href="#saw" x="609" y="221"/>
<use href="#sin" x="516" y="241"/><use href="#tri" x="563" y="241"/><use href="#saw" x="609" y="241"/>
<use href="#sin" x="516" y="261"/><use href="#tri" x="563" y="261"/><use href="#saw" x="609" y="261"/>
<use href="#sin" x="516" y="282"/><use href="#tri" x="563" y="282"/><use href="#saw" x="609" y="282"/>
<use href="#sin" x="516" y="302"/><use href="#tri" x="563" y="302"/><use href="#saw" x="609" y="302"/>
<use href="#sin" x="516" y="322"/><use href="#tri" x="563" y="322"/><use href="#saw" x="609" y="322"/>
<use href="#sin" x="987" y="202"/><use href="#tri" x="1032" y="202"/><use href="#saw" x="1078" y="202"/><use href="#sq" x="1124" y="202"/>
</g>
<!-- dropdown arrows -->
<path d="M1247 13 L1255 13 L1251 18 Z" fill="#aaa"/>
<path d="M1271 13 L1280 13 L1275.5 7 Z M1271 17 L1280 17 L1275.5 23 Z" fill="#bbb"/>
<!-- envelope graph -->
<polyline points="121,470 130,408 157,462 159,418 216,459 259,439 417,470" fill="none" stroke="#8bb6e0" stroke-width="1.2"/>
<g fill="#8bb6e0"><circle cx="121" cy="470" r="2"/><circle cx="130" cy="408" r="2"/><circle cx="157" cy="462" r="2"/><circle cx="159" cy="418" r="2"/><circle cx="216" cy="459" r="2"/><circle cx="259" cy="439" r="2"/><circle cx="417" cy="470" r="2"/></g>
<g>
<rect x="440" y="420" width="12" height="12" fill="#4c9ff0"/><rect x="455" y="420" width="12" height="12" fill="#80b4e4"/><rect x="470" y="420" width="12" height="12" fill="#80b4e4"/><rect x="485" y="420" width="12" height="12" fill="#80b4e4"/><rect x="500" y="420" width="12" height="12" fill="#80b4e4"/>
<rect x="440" y="436" width="12" height="12" fill="#80b4e4"/><rect x="455" y="436" width="12" height="12" fill="#80b4e4"/><rect x="470" y="436" width="12" height="12" fill="#80b4e4"/><rect x="485" y="436" width="12" height="12" fill="#80b4e4"/><rect x="500" y="436" width="12" height="12" fill="#80b4e4"/>
<rect x="440" y="452" width="12" height="12" fill="#4f5256"/><rect x="455" y="452" width="12" height="12" fill="#4f5256"/><rect x="470" y="452" width="12" height="12" fill="#4f5256"/><rect x="485" y="452" width="12" height="12" fill="#4f5256"/><rect x="500" y="452" width="12" height="12" fill="#4f5256"/>
<rect x="440" y="468" width="12" height="12" fill="#4f5256"/><rect x="455" y="468" width="12" height="12" fill="#4f5256"/><rect x="470" y="468" width="12" height="12" fill="#4f5256"/><rect x="485" y="468" width="12" height="12" fill="#4f5256"/><rect x="500" y="468" width="12" height="12" fill="#4f5256"/>
</g>
<!-- siren tree lines -->
<g stroke="#7a7e84" stroke-width="1" fill="none">
<path d="M953.5 94 V400 M953 94 H974 M953 153.5 H966 M953 400.5 H966"/>
<path d="M1025 453.5 H1060"/>
<path d="M293 623.5 H318 M293 693.5 H318 M322.5 601 V723"/>
</g>
<!-- knobs: track -->
<g fill="none" stroke="#585b60" stroke-linecap="butt">
<circle cx="660" cy="455" r="27" stroke-width="4" stroke-dasharray="127.2 300" transform="rotate(135 660 455)"/>
<circle cx="802" cy="455" r="25" stroke-width="4" stroke-dasharray="117.8 300" transform="rotate(135 802 455)"/>
<circle cx="869" cy="455" r="25" stroke-width="4" stroke-dasharray="117.8 300" transform="rotate(135 869 455)"/>
<circle cx="1214" cy="116" r="30" stroke-width="4" stroke-dasharray="141.4 300" transform="rotate(135 1214 116)"/>
<circle cx="992" cy="452" r="24" stroke-width="3.5" stroke-dasharray="113.1 300" transform="rotate(135 992 452)"/>
<circle cx="1091" cy="452" r="24" stroke-width="3.5" stroke-dasharray="113.1 300" transform="rotate(135 1091 452)"/>
<circle cx="1156" cy="452" r="24" stroke-width="3.5" stroke-dasharray="113.1 300" transform="rotate(135 1156 452)"/>
<circle cx="1221" cy="452" r="24" stroke-width="3.5" stroke-dasharray="113.1 300" transform="rotate(135 1221 452)"/>
<circle cx="47" cy="620" r="22" stroke-width="4" stroke-dasharray="103.7 300" transform="rotate(135 47 620)"/>
<circle cx="115" cy="620" r="22" stroke-width="4" stroke-dasharray="103.7 300" transform="rotate(135 115 620)"/>
<circle cx="47" cy="688" r="22" stroke-width="4" stroke-dasharray="103.7 300" transform="rotate(135 47 688)"/>
<circle cx="115" cy="688" r="22" stroke-width="4" stroke-dasharray="103.7 300" transform="rotate(135 115 688)"/>
<circle cx="183" cy="688" r="22" stroke-width="4" stroke-dasharray="103.7 300" transform="rotate(135 183 688)"/>
<circle cx="355" cy="624" r="20" stroke-width="3" stroke-dasharray="94.2 300" transform="rotate(135 355 624)"/>
<circle cx="442" cy="624" r="20" stroke-width="3" stroke-dasharray="94.2 300" transform="rotate(135 442 624)"/>
<circle cx="505" cy="624" r="20" stroke-width="3" stroke-dasharray="94.2 300" transform="rotate(135 505 624)"/>
<circle cx="566" cy="620" r="23" stroke-width="4" stroke-dasharray="108.4 300" transform="rotate(135 566 620)"/>
<circle cx="355" cy="694" r="20" stroke-width="3" stroke-dasharray="94.2 300" transform="rotate(135 355 694)"/>
<circle cx="442" cy="694" r="20" stroke-width="3" stroke-dasharray="94.2 300" transform="rotate(135 442 694)"/>
<circle cx="505" cy="694" r="20" stroke-width="3" stroke-dasharray="94.2 300" transform="rotate(135 505 694)"/>
<circle cx="566" cy="690" r="23" stroke-width="4" stroke-dasharray="108.4 300" transform="rotate(135 566 690)"/>
</g>
<!-- knobs: value -->
<g fill="none" stroke="#4a9eea">
<circle cx="660" cy="455" r="27" stroke-width="4" stroke-dasharray="57 300" transform="rotate(135 660 455)"/>
<circle cx="802" cy="455" r="25" stroke-width="4" stroke-dasharray="47 300" transform="rotate(135 802 455)"/>
<circle cx="869" cy="455" r="25" stroke-width="4" stroke-dasharray="4 300" transform="rotate(135 869 455)"/>
<circle cx="1214" cy="116" r="30" stroke-width="4" stroke-dasharray="70.7 300" transform="rotate(135 1214 116)"/>
<circle cx="992" cy="452" r="24" stroke-width="3.5" stroke-dasharray="34 300" transform="rotate(135 992 452)"/>
<circle cx="1091" cy="452" r="24" stroke-width="3.5" stroke-dasharray="66 300" transform="rotate(135 1091 452)"/>
<circle cx="1156" cy="452" r="24" stroke-width="3.5" stroke-dasharray="54 300" transform="rotate(135 1156 452)"/>
<circle cx="1221" cy="452" r="24" stroke-width="3.5" stroke-dasharray="3 300" transform="rotate(135 1221 452)"/>
<circle cx="47" cy="620" r="22" stroke-width="4" stroke-dasharray="58 300" transform="rotate(135 47 620)"/>
<circle cx="115" cy="620" r="22" stroke-width="4" stroke-dasharray="11 300" transform="rotate(135 115 620)"/>
<circle cx="47" cy="688" r="22" stroke-width="4" stroke-dasharray="3 300" transform="rotate(135 47 688)"/>
<circle cx="115" cy="688" r="22" stroke-width="4" stroke-dasharray="103.7 300" transform="rotate(135 115 688)"/>
<circle cx="183" cy="688" r="22" stroke-width="4" stroke-dasharray="76 300" transform="rotate(135 183 688)"/>
<circle cx="355" cy="624" r="20" stroke-width="3" stroke-dasharray="16 300" transform="rotate(135 355 624)"/>
<circle cx="442" cy="624" r="20" stroke-width="3" stroke-dasharray="16 300" transform="rotate(135 442 624)"/>
<circle cx="505" cy="624" r="20" stroke-width="3" stroke-dasharray="9 300" transform="rotate(135 505 624)"/>
<circle cx="566" cy="620" r="23" stroke-width="4" stroke-dasharray="68 300" transform="rotate(135 566 620)"/>
<circle cx="355" cy="694" r="20" stroke-width="3" stroke-dasharray="12 300" transform="rotate(135 355 694)"/>
<circle cx="442" cy="694" r="20" stroke-width="3" stroke-dasharray="12 300" transform="rotate(135 442 694)"/>
<circle cx="505" cy="694" r="20" stroke-width="3" stroke-dasharray="8 300" transform="rotate(135 505 694)"/>
</g>
<!-- small x marks in knobs -->
<g stroke="#6a6e74" stroke-width="1">
<path d="M988 434 l8 8 m0 -8 l-8 8 M1087 434 l8 8 m0 -8 l-8 8 M1152 434 l8 8 m0 -8 l-8 8 M1217 434 l8 8 m0 -8 l-8 8"/>
<path d="M352 601 l6 6 m0 -6 l-6 6 M439 601 l6 6 m0 -6 l-6 6 M502 601 l6 6 m0 -6 l-6 6 M352 671 l6 6 m0 -6 l-6 6 M439 671 l6 6 m0 -6 l-6 6 M502 671 l6 6 m0 -6 l-6 6"/>
</g>
<!-- osc label lines -->
<g stroke="#6a6e74" stroke-width="1">
<path d="M75 185.5 H117 M75 205.5 H117 M75 226.5 H117 M75 246.5 H117 M75 266.5 H117 M75 287.5 H117 M75 307.5 H117 M75 327.5 H117"/>
</g>
</svg>
</body></html>
